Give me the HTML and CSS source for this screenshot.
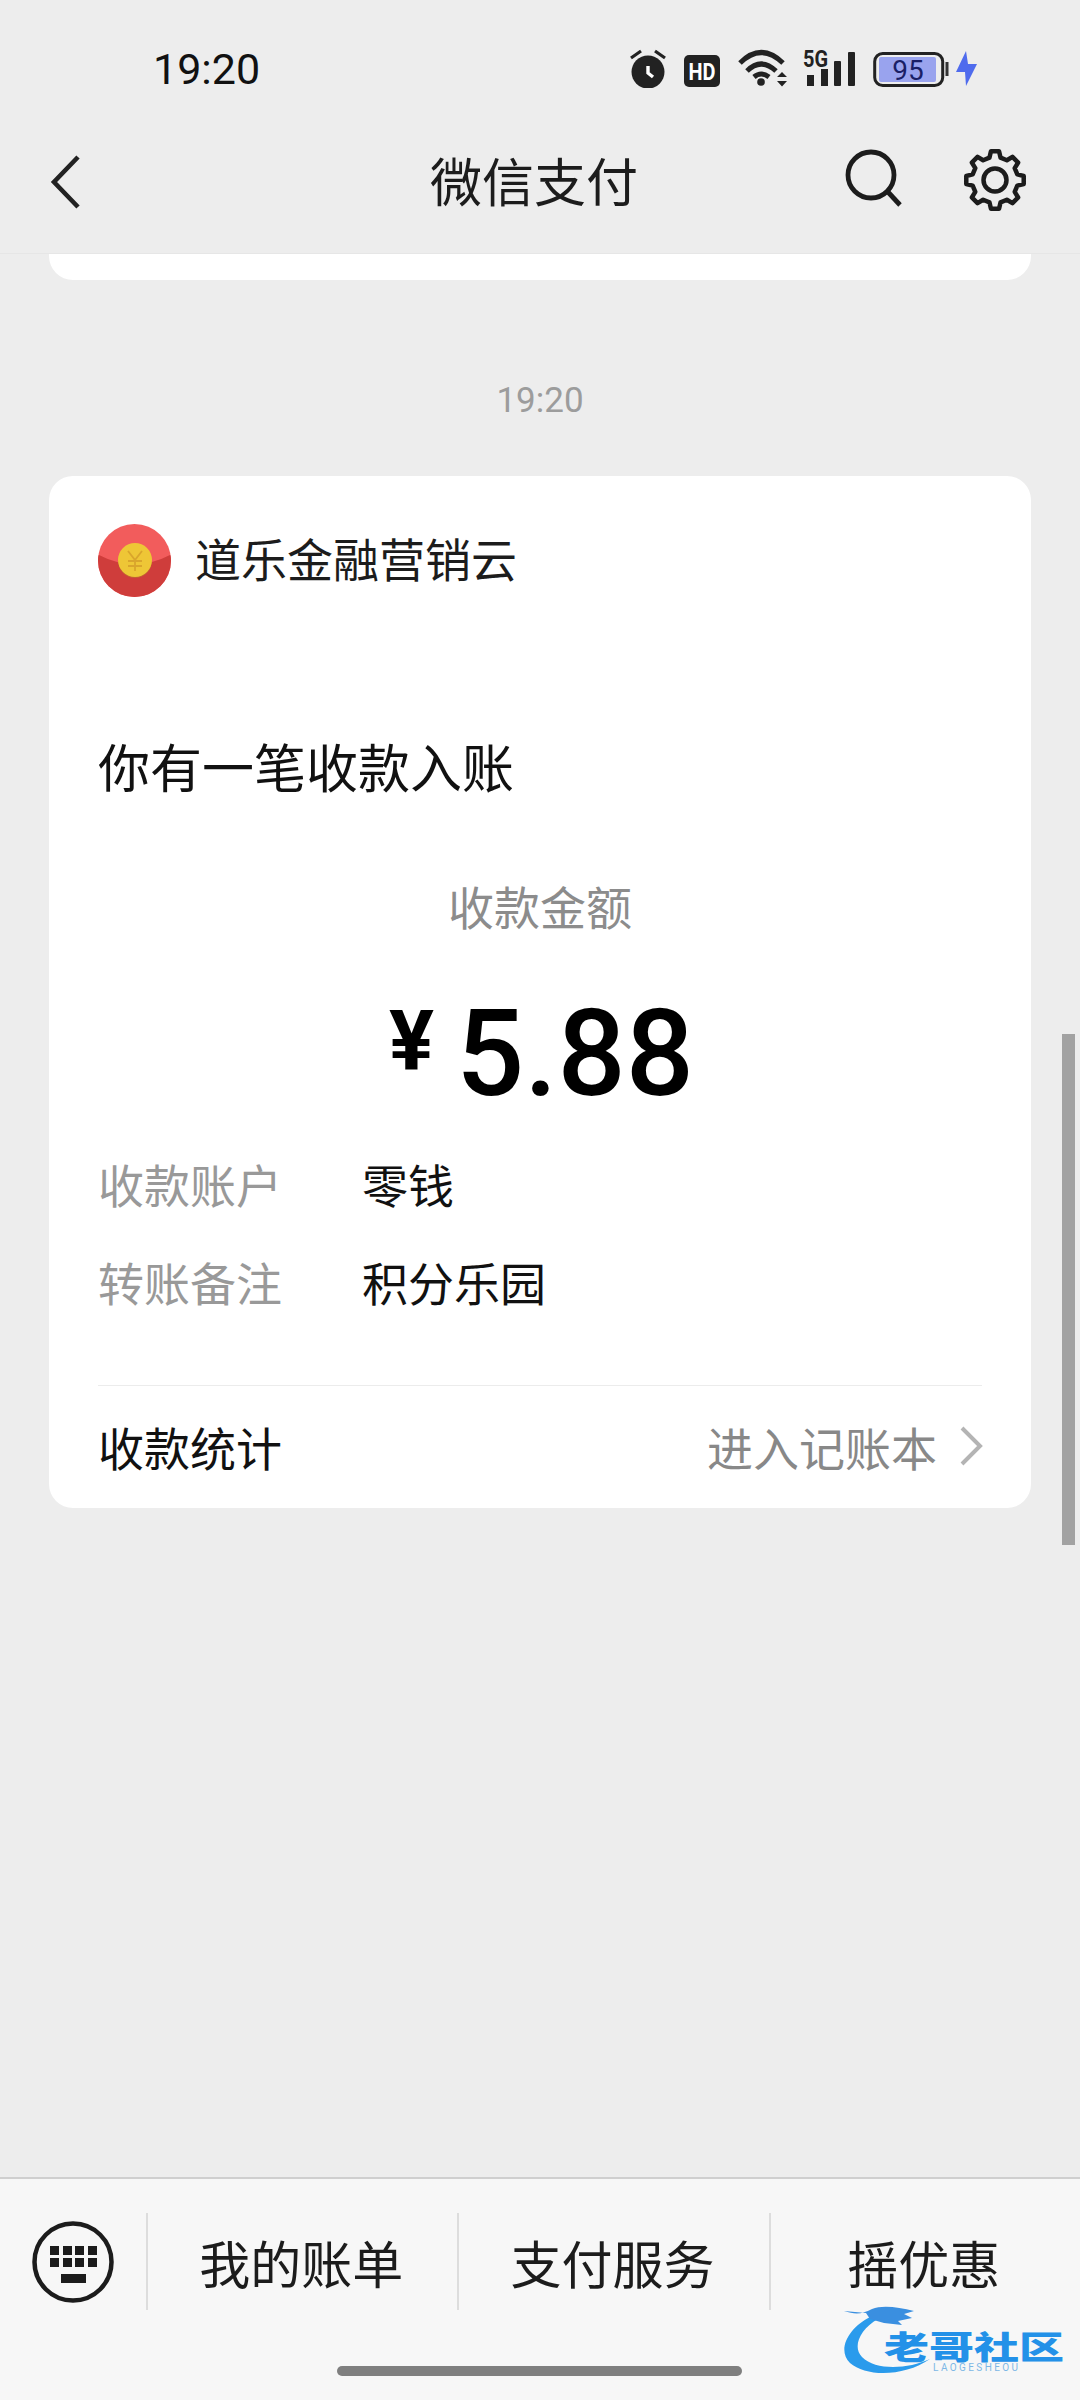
FILE: index.html
```html
<!DOCTYPE html>
<html lang="zh-CN">
<head>
<meta charset="utf-8">
<title>微信支付</title>
<link rel="stylesheet" href="styles.css">
</head>
<body>
<div class="phone">
  <header class="top">
    <div class="status">
      <span class="clock">19:20</span>
      <div class="status-icons">
        <svg class="si si-alarm" viewBox="0 0 36 40"><path d="M1 10 L11 3 M35 10 L25 3" stroke="#222" stroke-width="3.2" fill="none"/><circle cx="18" cy="24" r="16.5" fill="#222"/><path d="M18 18 V25 L23 29" stroke="#fff" stroke-width="3.4" fill="none"/></svg>
        <svg class="si si-hd" viewBox="0 0 36 40"><rect x="0" y="7" width="36" height="32" rx="5" fill="#222"/><text x="18" y="32" class="hd-text" text-anchor="middle" textLength="27" lengthAdjust="spacingAndGlyphs">HD</text></svg>
        <svg class="si si-wifi" viewBox="0 0 52 40"><g fill="none" stroke="#222" stroke-width="5"><path d="M2 15 Q23 -6 45 15"/><path d="M9 23 Q23 9 38 23"/><path d="M16 29 Q23 23 31 29"/></g><circle cx="23" cy="34" r="3.8" fill="#222"/><path d="M44 24 L49 29 H39 Z M39 33 H49 L44 38.500 Z" fill="#222"/></svg>
        <div class="signal">
          <svg class="si si-signal" viewBox="0 0 52 40"><g fill="#222"><rect x="4" y="27" width="7" height="11"/><rect x="18" y="21" width="7" height="17"/><rect x="31" y="13" width="7" height="25" rx="1"/><rect x="45" y="4" width="7" height="34" rx="1"/></g></svg>
          <span class="fiveg">5G</span>
        </div>
        <svg class="si si-battery" viewBox="0 0 77 40"><rect x="1.700" y="5.500" width="68" height="32" rx="8" fill="none" stroke="#222" stroke-width="3"/><rect x="6" y="9" width="57" height="25" rx="2" fill="#99a3ee"/><rect x="72.500" y="14" width="3" height="14" fill="#333"/><text x="35" y="32" class="batt-text" text-anchor="middle">95</text></svg>
        <svg class="si si-bolt" viewBox="0 0 21 40"><path d="M10 3 L0 24 H9 L10 38 L21 16 H12 Z" fill="#4f6bed"/></svg>
      </div>
    </div>
    <nav class="nav">
      <svg class="back" viewBox="0 0 32 56"><path d="M28 3 L4 28 L28 53" fill="none" stroke="#222" stroke-width="4.600"/></svg>
      <h1 class="title">微信支付</h1>
      <div class="nav-actions">
        <svg class="search" viewBox="0 0 60 66"><circle cx="26" cy="27" r="23" fill="none" stroke="#1c1c1c" stroke-width="4.800"/><path d="M43 44 L55 57" stroke="#1c1c1c" stroke-width="4.800" fill="none"/></svg>
        <svg class="gear" viewBox="-33 -33 66 66"><polygon points="-5.57,-22.32 -4.04,-28.72 4.04,-28.72 5.57,-22.32 11.85,-19.71 17.45,-23.16 23.16,-17.45 19.71,-11.85 22.32,-5.57 28.72,-4.04 28.72,4.04 22.32,5.57 19.71,11.85 23.16,17.45 17.45,23.16 11.85,19.71 5.57,22.32 4.04,28.72 -4.04,28.72 -5.57,22.32 -11.85,19.71 -17.45,23.16 -23.16,17.45 -19.71,11.85 -22.32,5.57 -28.72,4.04 -28.72,-4.04 -22.32,-5.57 -19.71,-11.85 -23.16,-17.45 -17.45,-23.16 -11.85,-19.71" fill="none" stroke="#1c1c1c" stroke-width="4.500" stroke-linejoin="round"/><circle r="11.500" fill="none" stroke="#1c1c1c" stroke-width="4.500"/></svg>
      </div>
    </nav>
  </header>

  <main class="feed">
    <div class="card-tail"></div>
    <div class="stamp">19:20</div>
    <section class="card">
      <div class="brand">
        <svg class="logo" viewBox="0 0 73 73"><circle cx="36.500" cy="36.500" r="36.500" fill="#f25c5c"/><path d="M0 36.500 Q0 31 1 31 Q18 40 36.500 40 Q55 40 72 31 Q73 31 73 36.500 A36.500 36.500 0 0 1 0 36.500 Z" fill="#cf3d3b"/><circle cx="37" cy="37" r="17" fill="#b8862a" opacity=".5"/><circle cx="37" cy="36" r="17" fill="#eec636"/><path d="M30 27 L37 36 L44 27 M37 36 V47 M30 37 H44 M30 42 H44" fill="none" stroke="#d9a52c" stroke-width="1.800"/></svg>
        <span class="brand-name">道乐金融营销云</span>
      </div>
      <h2 class="headline">你有一笔收款入账</h2>
      <div class="amount-label">收款金额</div>
      <div class="amount"><span class="yen">¥</span><span class="value">5.88</span></div>
      <dl class="rows">
        <div class="row"><dt>收款账户</dt><dd>零钱</dd></div>
        <div class="row"><dt>转账备注</dt><dd>积分乐园</dd></div>
      </dl>
      <div class="card-foot">
        <span class="foot-label">收款统计</span>
        <span class="foot-link">进入记账本<svg class="foot-chevron" viewBox="0 0 24 40"><path d="M3 2 L21 20 L3 38" fill="none" stroke="#b4b4b4" stroke-width="4"/></svg></span>
      </div>
    </section>
    <div class="scrollbar"></div>
  </main>

  <footer class="bar">
    <div class="tabs">
      <div class="kb-cell">
        <svg class="kb" viewBox="0 0 82 82"><circle cx="41" cy="41" r="38.500" fill="none" stroke="#1c1c1c" stroke-width="4.500"/><g fill="#1c1c1c"><rect x="18" y="25" width="9" height="9"/><rect x="31" y="25" width="9" height="9"/><rect x="43" y="25" width="9" height="9"/><rect x="56" y="25" width="9" height="9"/><rect x="18" y="37" width="9" height="9"/><rect x="31" y="37" width="9" height="9"/><rect x="43" y="37" width="9" height="9"/><rect x="56" y="37" width="9" height="9"/><rect x="29" y="53" width="25" height="9"/></g></svg>
      </div>
      <div class="tab">我的账单</div>
      <div class="tab">支付服务</div>
      <div class="tab">摇优惠</div>
    </div>
    <div class="home"></div>
    <div class="watermark">
      <svg class="dragon" viewBox="0 0 90 75"><path d="M28 12 C8 22 -6 44 8 58 C24 72 62 72 88 54 C66 64 34 66 20 52 C10 42 18 24 36 14 Z" fill="#2a9bec"/><path d="M2 6 C14 10 20 9 30 4 C40 0 56 2 72 6 L62 9 L70 13 L56 16 L60 20 L42 18 L28 14 L24 8 Z" fill="#3a8fe0"/></svg>
      <span class="wm-cn">老哥社区</span>
      <span class="wm-en">LAOGESHEOU</span>
    </div>
  </footer>
</div>
</body>
</html>
```

FILE: styles.css
```css
* { box-sizing: border-box; }
html, body { margin: 0; padding: 0; }
body { font-family: "Noto Sans CJK SC", "Noto Sans", sans-serif; background: #ededed; }
.phone { width: 1080px; height: 2400px; display: flex; flex-direction: column; overflow: hidden; background: #ededed; }

/* top */
.top { flex: none; height: 254px; border-bottom: 1px solid #e6e6e6; }
.status { height: 127px; padding: 48px 103px 0 153px; display: flex; justify-content: space-between; align-items: flex-start; }
.clock { font: 400 43px/42px Roboto, sans-serif; color: #111; }
.status-icons { display: flex; align-items: flex-start; }
.si { display: block; height: 40px; }
.si-alarm { width: 36px; margin-right: 18px; }
.si-hd { width: 36px; margin-right: 18px; }
.si-wifi { width: 52px; margin-right: 13px; }
.signal { position: relative; width: 52px; height: 40px; margin-right: 18px; }
.si-signal { width: 52px; }
.si-battery { width: 77px; margin-right: 6px; }
.si-bolt { width: 21px; }
.hd-text { font: 700 24px Roboto, sans-serif; fill: #fff; }
.fiveg { position: absolute; left: 0; top: 1px; font: 700 24px/20px Roboto, sans-serif; color: #222; transform: scaleX(.83); transform-origin: left center; }
.batt-text { font: 400 28px Roboto, sans-serif; fill: #1a1f66; }

.nav { height: 126px; padding: 0 52px 20px 50px; display: flex; align-items: center; }
.back { width: 32px; height: 56px; flex: none; margin-top: 4px; }
.title { margin: 0 0 0 348px; font-size: 52px; font-weight: 400; line-height: 60px; color: #1c1c1c; }
.nav-actions { margin-left: auto; display: flex; align-items: center; }
.search { width: 60px; height: 66px; margin-right: 57px; margin-top: 2px; }
.gear { width: 66px; height: 66px; }

/* feed */
.feed { flex: 1; position: relative; padding: 0 49px; min-height: 0; }
.card-tail { height: 26px; background: #fff; border-radius: 0 0 24px 24px; }
.stamp { height: 196px; display: flex; align-items: center; justify-content: center; padding-top: 45px; font: 400 35px Roboto, sans-serif; color: #9c9c9c; }
.card { height: 1032px; background: #fff; border-radius: 24px; padding: 48px 49px 0; display: flex; flex-direction: column; }
.brand { display: flex; align-items: center; height: 73px; }
.logo { width: 73px; height: 73px; flex: none; }
.brand-name { margin: -6px 0 0 24px; font-size: 46px; line-height: 73px; color: #1c1c1c; }
.headline { margin: 139px 0 0; font-size: 52px; font-weight: 400; line-height: 60px; color: #111; }
.amount-label { margin-top: 81px; font-size: 46px; line-height: 56px; text-align: center; color: #8c8c8c; }
.amount { height: 224px; display: flex; justify-content: center; align-items: flex-start; padding: 61px 0 0 3px; color: #000; font-family: Roboto, sans-serif; }
.yen { font-size: 84px; font-weight: 700; line-height: 120px; margin: -12px 22px 0 0; }
.value { font-size: 120px; font-weight: 500; line-height: 120px; }
.rows { margin: -2px 0 0; display: flex; flex-direction: column; gap: 42px; }
.row { display: flex; height: 56px; align-items: center; font-size: 46px; line-height: 56px; }
.row dt { width: 264px; color: #999; }
.row dd { margin: 0; color: #111; }
.card-foot { margin-top: 76px; border-top: 1px solid #ececec; height: 121px; display: flex; justify-content: space-between; align-items: center; }
.foot-label { font-size: 46px; color: #111; }
.foot-link { display: flex; align-items: center; font-size: 46px; color: #888; }
.foot-chevron { width: 24px; height: 40px; margin-left: 21px; transform: translateX(1px); }
.scrollbar { position: absolute; left: 1062px; top: 780px; width: 13px; height: 511px; background: #a2a2a2; }

/* bottom */
.bar { flex: none; height: 223px; position: relative; background: #f7f7f7; border-top: 2px solid #cfcfcf; }
.tabs { display: flex; height: 97px; margin-top: 34px; }
.kb-cell { width: 146px; flex: none; display: flex; align-items: center; padding-left: 32px; }
.kb { width: 82px; height: 82px; }
.tab { flex: 1; display: flex; align-items: center; justify-content: center; padding-right: 3px; font-size: 51px; color: #1c1c1c; border-left: 2px solid #dddddd; }
.home { position: absolute; left: 337px; top: 187px; width: 405px; height: 10px; border-radius: 5px; background: #7f7f7f; }
.watermark { position: absolute; left: 842px; top: 126px; width: 230px; height: 75px; }
.dragon { position: absolute; left: 0; top: 0; width: 90px; height: 75px; }
.wm-cn { position: absolute; left: 42px; top: 24px; font-size: 45px; font-weight: 900; line-height: 32px; white-space: nowrap; transform: scaleY(.72); transform-origin: center; color: #2391e8; }
.wm-en { position: absolute; left: 91px; top: 57px; font: 400 10px/12px Roboto, sans-serif; letter-spacing: 2.400px; color: #7db7e6; white-space: nowrap; }
```
